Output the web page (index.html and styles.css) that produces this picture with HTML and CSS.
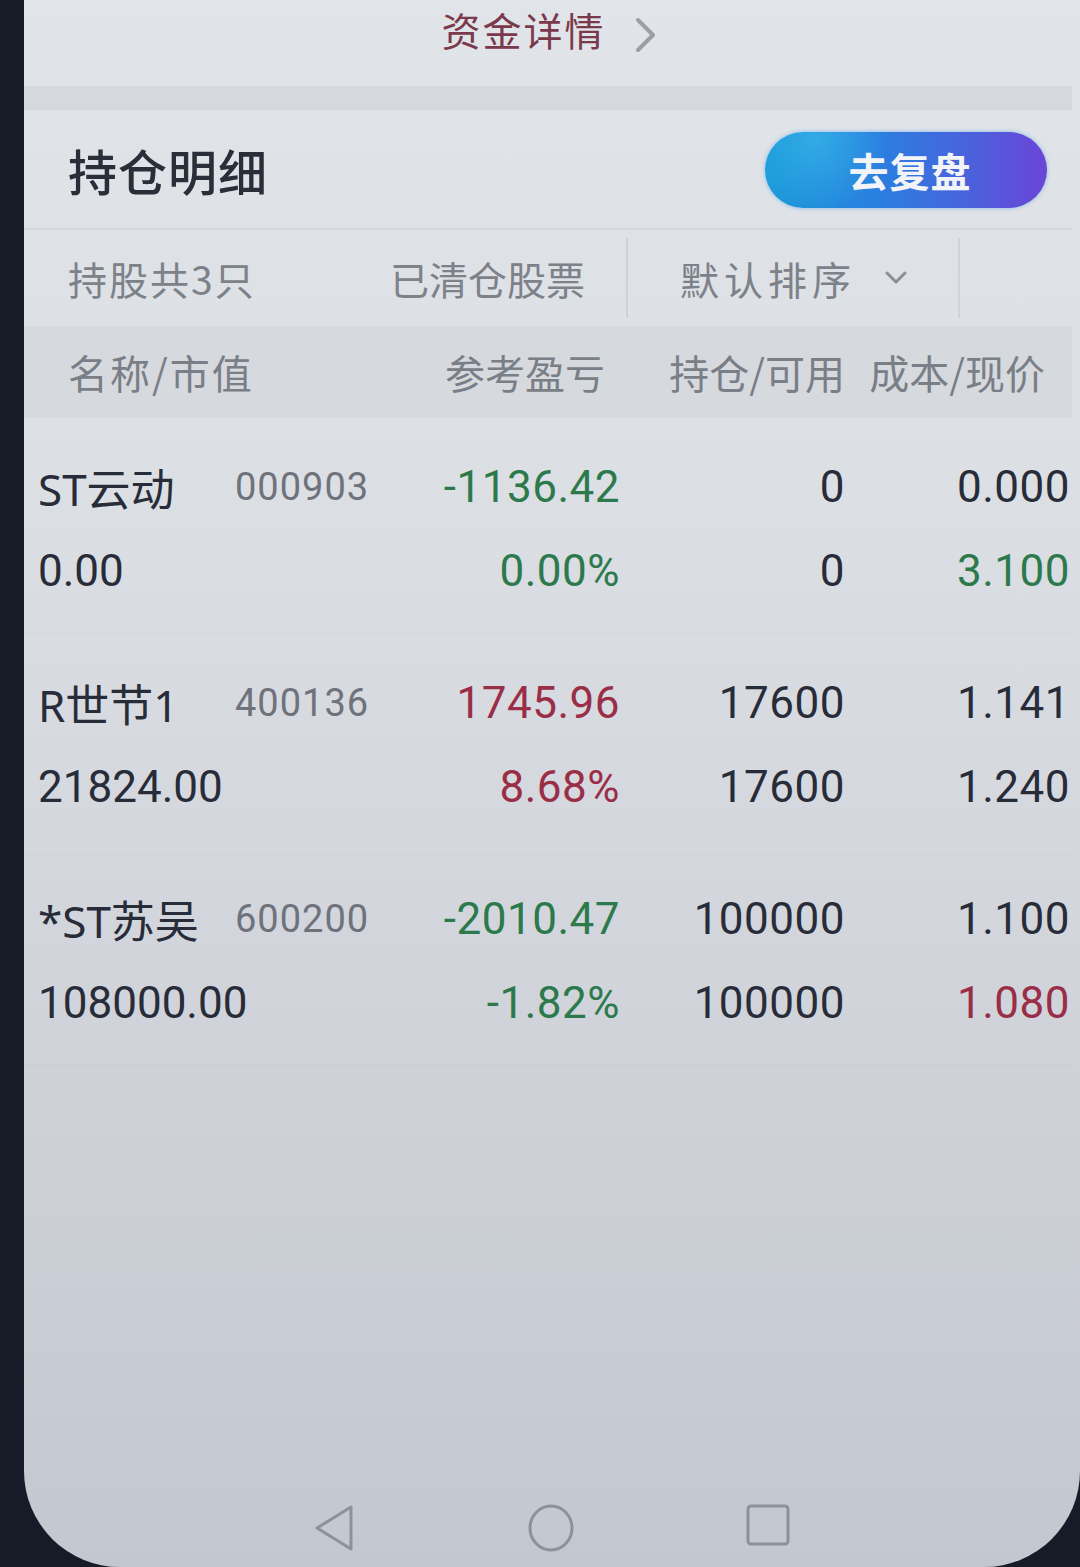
FILE: index.html
```html
<html>
    <head>
        <title>持仓明细</title>
        <link rel="stylesheet" href="styles.css">
    </head>
    <body>
        <div class="screen">
            <div class="fund-link">
                <span>资金详情</span>
                <svg class="chevron" width="26" height="40" viewBox="0 0 26 40"><path d="M5 6 L20 21 L5 36" fill="none" stroke="#9a9ea6" stroke-width="4" stroke-linecap="round" stroke-linejoin="round"/></svg>
            </div>
            <div class="band"></div>
            <div class="section-head">
                <h1>持仓明细</h1>
                <button class="review">去复盘</button>
            </div>
            <div class="filters">
                <div class="filter count">持股共3只</div>
                <div class="filter cleared">已清仓股票</div>
                <div class="filter sort">默认排序
                    <svg width="28" height="20" viewBox="0 0 28 20"><path d="M5 5 L14 14 L23 5" fill="none" stroke="#8a8e96" stroke-width="3" stroke-linecap="round" stroke-linejoin="round"/></svg>
                </div>
            </div>
            <div class="col-head">
                <div class="h-name">名称/市值</div>
                <div class="h-profit">参考盈亏</div>
                <div class="h-hold">持仓/可用</div>
                <div class="h-price">成本/现价</div>
            </div>

            <div class="row">
                <div class="c-name">ST云动</div>
                <div class="c-code">000903</div>
                <div class="c-num green">-1136.42</div>
                <div class="c-num">0</div>
                <div class="c-num">0.000</div>
                <div class="c-value">0.00</div>
                <div class="c-num green">0.00%</div>
                <div class="c-num">0</div>
                <div class="c-num green">3.100</div>
            </div>
            <div class="row">
                <div class="c-name">R世节1</div>
                <div class="c-code">400136</div>
                <div class="c-num red">1745.96</div>
                <div class="c-num">17600</div>
                <div class="c-num">1.141</div>
                <div class="c-value">21824.00</div>
                <div class="c-num red">8.68%</div>
                <div class="c-num">17600</div>
                <div class="c-num">1.240</div>
            </div>
            <div class="row last">
                <div class="c-name">*ST苏吴</div>
                <div class="c-code">600200</div>
                <div class="c-num green">-2010.47</div>
                <div class="c-num">100000</div>
                <div class="c-num">1.100</div>
                <div class="c-value">108000.00</div>
                <div class="c-num green">-1.82%</div>
                <div class="c-num">100000</div>
                <div class="c-num red">1.080</div>
            </div>

            <div class="empty"></div>

            <div class="navbar">
                <svg width="46" height="50" viewBox="0 0 46 50"><path d="M40 4 L40 46 L6 25 Z" fill="none" stroke="#8d9199" stroke-width="3" stroke-linejoin="round"/></svg>
                <svg width="48" height="50" viewBox="0 0 48 50"><ellipse cx="24" cy="25" rx="21" ry="22" fill="none" stroke="#8d9199" stroke-width="3"/></svg>
                <svg width="46" height="46" viewBox="0 0 46 46"><rect x="3" y="3" width="40" height="38" rx="3" fill="none" stroke="#8d9199" stroke-width="3"/></svg>
            </div>
        </div>
    </body>
</html>
```

FILE: styles.css
```css
html, body {
    margin: 0;
    padding: 0;
}
body {
    background: #161b27;
    width: 1080px;
    height: 1567px;
    overflow: hidden;
    font-family: "Noto Sans CJK SC", "Noto Sans", sans-serif;
}
.screen {
    margin-left: 24px;
    width: 1048px;
    padding-right: 8px;
    height: 1567px;
    background: linear-gradient(180deg, #e1e4e8 0%, #dcdfe4 30%, #d2d5db 60%, #c3c7cf 100%);
    border-radius: 0 0 96px 96px;
    display: flex;
    flex-direction: column;
    color: #262b37;
}
.fund-link {
    height: 86px;
    display: flex;
    justify-content: center;
    align-items: flex-start;
    gap: 27px;
    padding-left: 4px;
    box-sizing: border-box;
}
.fund-link span {
    font-size: 39px;
    line-height: 58px;
    color: #7a3a4c;
    letter-spacing: 2px;
}
.fund-link .chevron {
    margin-top: 14px;
}
.band {
    height: 24px;
    background: #d5d8dd;
}
.section-head {
    height: 118px;
    display: flex;
    align-items: center;
    justify-content: space-between;
    padding: 0 25px 0 44px;
    border-bottom: 2px solid #d3d6db;
}
h1 {
    margin: 0;
    font-size: 49px;
    font-weight: 500;
    color: #292e39;
    letter-spacing: 1px;
}
.review {
    width: 282px;
    height: 76px;
    margin-top: 2px;
    border: none;
    border-radius: 38px;
    background: radial-gradient(circle at 18% 10%, rgba(60, 190, 235, 0.6) 0, rgba(60, 190, 235, 0) 30%),
        linear-gradient(90deg, #1a9ad9 0%, #2a7fe0 40%, #4d5fdc 75%, #6b45d6 100%);
    box-shadow: 0 0 4px #7fb8f0;
    color: #f2f4f8;
    font-family: "Noto Sans CJK SC", sans-serif;
    font-size: 40px;
    font-weight: 700;
    padding-left: 14px;
    letter-spacing: 1px;
}
.filters {
    height: 96px;
    display: flex;
    align-items: center;
    font-size: 39px;
    color: #7d8189;
}
.filter {
    height: 80px;
    display: flex;
    align-items: center;
    box-sizing: border-box;
}
.count {
    width: 366px;
    padding-left: 44px;
    letter-spacing: 2px;
}
.cleared {
    width: 238px;
    border-right: 2px solid #cfd2d7;
}
.sort {
    width: 332px;
    padding-left: 52px;
    gap: 26px;
    letter-spacing: 5px;
    border-right: 2px solid #cfd2d7;
}
.col-head {
    height: 92px;
    display: grid;
    grid-template-columns: 375px 162px 240px 200px;
    align-items: center;
    background: #d6d9de;
    font-size: 40px;
    color: #7a7e86;
    padding-left: 44px;
}
.h-name {
    letter-spacing: 2px;
}
.h-profit, .h-hold, .h-price {
    text-align: right;
}
.row {
    display: grid;
    grid-template-columns: 197px 135px 250px 225px 225px;
    grid-template-rows: 84px 84px;
    align-items: center;
    padding: 27px 0 19px 14px;
    border-bottom: 2px solid #d6d9de;
    font-family: Roboto, "Noto Sans CJK SC", sans-serif;
    font-size: 44px;
    color: #272c38;
}
.row.last {
    border-bottom: none;
}
.c-name {
    font-family: "Noto Sans", "Noto Sans CJK SC", sans-serif;
    font-size: 44px;
}
.c-code {
    font-size: 38px;
    color: #6e727b;
    letter-spacing: 1px;
}
.c-value {
    grid-column: span 2;
}
.c-num {
    text-align: right;
    letter-spacing: 0.5px;
}
.green {
    color: #2c7a4c;
}
.red {
    color: #9a2e47;
}
.empty {
    flex: 1;
    border-top: 2px solid #cdd0d6;
}
.navbar {
    height: 100px;
    display: flex;
    justify-content: center;
    align-items: flex-start;
    gap: 170px;
    padding-top: 36px;
    padding-left: 6px;
    box-sizing: border-box;
}
```
